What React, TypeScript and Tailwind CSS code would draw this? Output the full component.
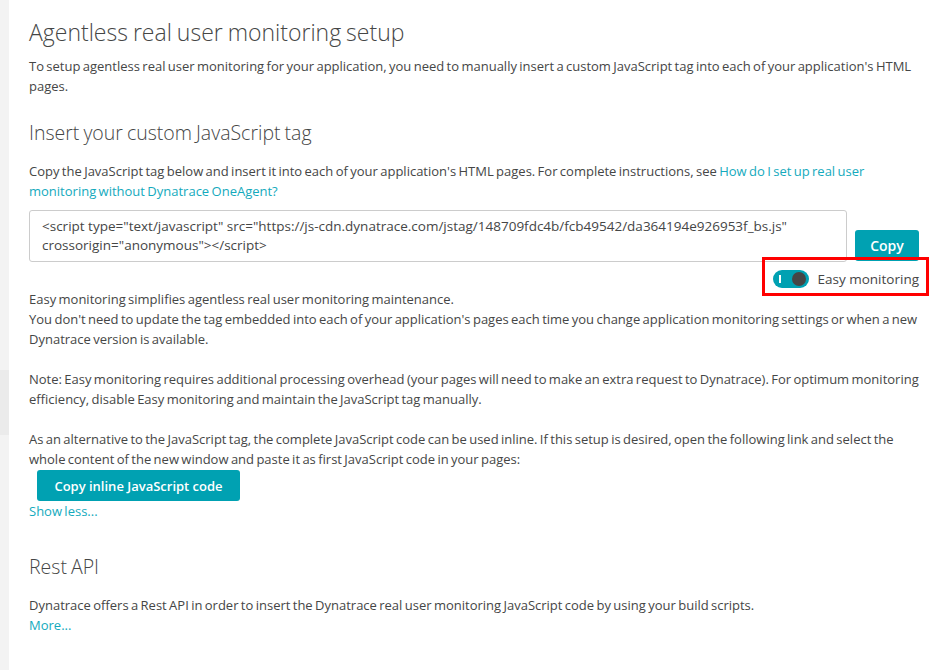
import React from 'react';

const Toggle = () => (
  <div className="relative h-[18px] w-9 rounded-full bg-[#00a1b2]">
    <span className="absolute left-[6px] top-[5px] h-2 w-[2px] bg-white" />
    <span className="absolute right-[3px] top-[2px] h-[14px] w-[14px] rounded-full bg-[#454646]" />
  </div>
);

const App = () => {
  return (
    <div className="flex min-h-[670px] bg-white text-[#454646] font-['Open_Sans',sans-serif] text-[13px] leading-5 [word-spacing:-1px]">
      <div className="flex w-[9px] shrink-0 flex-col bg-[#f3f3f3]">
        <div className="h-[370px]" />
        <div className="h-[65px] bg-[#ebebeb]" />
      </div>

      <main className="ml-5 w-[890px]">
        <h1 className="mt-4 text-[23px] font-light leading-8">Agentless real user monitoring setup</h1>
        <p className="mt-2">
          To setup agentless real user monitoring for your application, you need to manually insert a custom JavaScript tag into each of your application's HTML pages.
        </p>

        <h2 className="mt-[23px] text-[19.5px] font-light leading-7">Insert your custom JavaScript tag</h2>
        <p className="mt-[14px]">
          Copy the JavaScript tag below and insert it into each of your application's HTML pages. For complete instructions, see{' '}
          <a className="text-[#14aabd]" href="#">How do I set up real user monitoring without Dynatrace OneAgent?</a>
        </p>

        <div className="mt-[9px] flex items-end gap-2">
          <div className="h-[52px] flex-1 rounded-[3px] border border-[#cccccc] px-3 py-[6px] text-[13.5px] leading-[19px] [word-spacing:0px]">
            &lt;script type="text/javascript" src="https://js-cdn.dynatrace.com/jstag/148709fdc4b/fcb49542/da364194e926953f_bs.js" crossorigin="anonymous"&gt;&lt;/script&gt;
          </div>
          <button className="mb-px h-[31px] w-16 rounded-[3px] bg-[#00a1b2] text-[14px] font-semibold text-white">Copy</button>
        </div>

        <div className="mt-[7px] flex justify-end">
          <div className="relative flex h-5 items-center gap-[9px] text-[13.5px] [word-spacing:0px]">
            <Toggle />
            <span>Easy monitoring</span>
            <span className="pointer-events-none absolute -bottom-[7px] -left-[11px] -right-[10px] -top-[12px] border-[3px] border-[#ff0000]" />
          </div>
        </div>

        <p>
          Easy monitoring simplifies agentless real user monitoring maintenance.
          <br />
          You don't need to update the tag embedded into each of your application's pages each time you change application monitoring settings or when a new Dynatrace version is available.
        </p>
        <p className="mt-5">
          Note: Easy monitoring requires additional processing overhead (your pages will need to make an extra request to Dynatrace). For optimum monitoring efficiency, disable Easy monitoring and maintain the JavaScript tag manually.
        </p>
        <p className="mt-5">
          As an alternative to the JavaScript tag, the complete JavaScript code can be used inline. If this setup is desired, open the following link and select the whole content of the new window and paste it as first JavaScript code in your pages:
        </p>
        <button className="ml-2 mt-px h-[31px] w-[203px] rounded-[3px] bg-[#00a1b2] text-[13px] font-semibold text-white">
          Copy inline JavaScript code
        </button>
        <a className="block text-[#14aabd]" href="#">Show less...</a>

        <h2 className="mt-8 text-[19.5px] font-light leading-7">Rest API</h2>
        <p className="mt-[14px]">
          Dynatrace offers a Rest API in order to insert the Dynatrace real user monitoring JavaScript code by using your build scripts.
        </p>
        <a className="block text-[#14aabd]" href="#">More...</a>
      </main>
    </div>
  );
};

export default App;
